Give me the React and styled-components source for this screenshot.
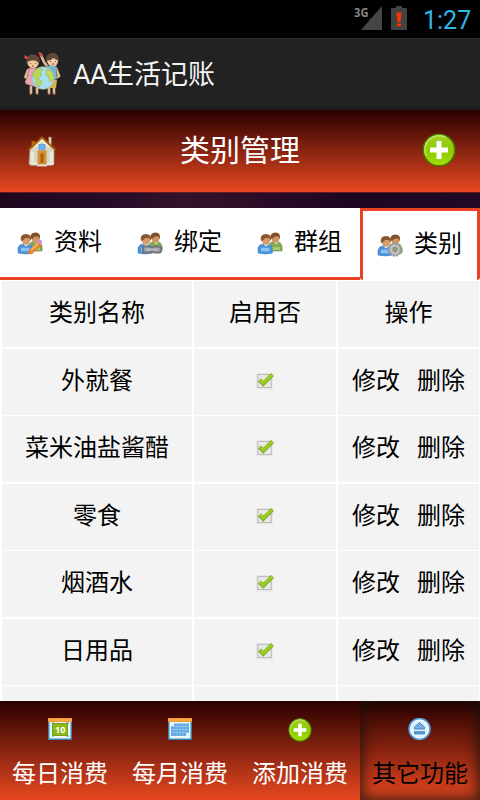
import React from "react";
import styled, { createGlobalStyle } from "styled-components";

const Global = createGlobalStyle`
  * { box-sizing: border-box; }
  html, body { margin: 0; padding: 0; overflow: hidden; }
  body { font-family: "Noto Sans CJK SC", sans-serif; background: #fff; }
  svg { display: block; flex: none; }
`;

const Screen = styled.div`
  width: 480px;
  height: 800px;
  display: flex;
  flex-direction: column;
  overflow: hidden;
  background: #fff;
`;

const StatusBar = styled.div`
  height: 38px;
  flex: none;
  background: #000;
  display: flex;
  align-items: flex-start;
  justify-content: flex-end;
  padding: 0 9px 0 0;
`;

const StatusIcons = styled.div`
  display: flex;
  gap: 8px;
`;

const Clock = styled.span`
  font: 400 25px/41px Roboto, sans-serif;
  width: 48px;
  margin-left: 16px;
  white-space: nowrap;
  color: #33b5e5;
`;

const TitleBar = styled.div`
  height: 72px;
  flex: none;
  background: #222;
  border-top: 1px solid #303030;
  border-bottom: 3px solid #1b1b1b;
  display: flex;
  align-items: center;
  padding: 1px 0 0 22px;
`;

const AppTitle = styled.h1`
  margin: 0 0 0 11px;
  font-size: 27px;
  line-height: 40px;
  font-weight: 400;
  color: #f3f3f3;
  white-space: nowrap;

  span { font-family: Roboto, sans-serif; letter-spacing: -0.6px; }
`;

const Header = styled.header`
  height: 83px;
  flex: none;
  background: linear-gradient(#290000, #e84820);
  border-bottom: 1px solid #641b1b;
  display: flex;
  align-items: center;
  justify-content: space-between;
  padding: 0 24px 3px 26px;
`;

const PageTitle = styled.h2`
  margin: 0;
  padding-bottom: 4px;
  font-size: 30px;
  line-height: 44px;
  font-weight: 400;
  color: #fff;
`;

const Band = styled.div`
  height: 15px;
  flex: none;
  background: linear-gradient(90deg, #1f0720, #270d28 25%, #35122c 38%, #280a26 60%, #1c0620 75%, #220a27);
`;

const Tabs = styled.nav`
  height: 72px;
  flex: none;
  display: grid;
  grid-template-columns: repeat(4, 120px);
`;

const Tab = styled.div`
  display: flex;
  align-items: center;
  gap: 11px;
  padding-left: ${(p) => (p.$active ? "14px" : "17px")};
  padding-top: ${(p) => (p.$active ? "0" : "2px")};
  border: 3px solid #e84222;
  border-width: ${(p) => (p.$active ? "3px 3px 0" : "0 0 3px")};
  border-radius: ${(p) => (p.$active ? "0 0 3px 3px" : "0")};
`;

const TabLabel = styled.span`
  padding-bottom: 7px;
  font-size: 24px;
  line-height: 36px;
  color: #000;
`;

const Table = styled.main`
  flex: 1;
  min-height: 0;
  overflow: hidden;
  padding: 1px 1px 0 2px;
  background: #fff;
`;

const Row = styled.div`
  display: grid;
  grid-template-columns: 190px 142px 141px;
  column-gap: 2px;
  height: 66px;
  margin-bottom: ${(p) => p.$gap}px;
`;

const Cell = styled.div`
  background: #f3f3f3;
  display: flex;
  align-items: center;
  justify-content: center;
  padding-bottom: 2px;
`;

const CellText = styled.span`
  padding-bottom: 4px;
  font-size: 24px;
  line-height: 36px;
  color: #000;
  white-space: nowrap;

  & + & { margin-left: 17px; }
`;

const BottomNav = styled.nav`
  height: 99px;
  flex: none;
  display: grid;
  grid-template-columns: repeat(4, 120px);
  background: linear-gradient(#290000, #e84820);
`;

const NavItem = styled.div`
  display: flex;
  flex-direction: column;
  align-items: center;
  padding-top: 17px;
  gap: 12px;
  font-size: 24px;
  line-height: 36px;
  color: ${(p) => (p.$active ? "#000" : "#fff")};
  box-shadow: ${(p) => (p.$active ? "inset 0 0 13px 3px rgba(25, 18, 12, 0.8)" : "none")};
`;

const SignalIcon = () => (
  <svg width="30" height="32" viewBox="0 0 30 32">
    <path d="M29 6V30H8Z" fill="#454545" />
    <path d="M0 0H16V19H0Z" fill="#000" />
    <path d="M16 21L18 18.500V19H16Z" fill="#454545" />
    <text x="1" y="17" fontFamily="Open Sans" fontWeight="700" fontSize="13" textLength="14.500" lengthAdjust="spacingAndGlyphs" fill="#858585">3G</text>
  </svg>
);

const BatteryIcon = () => (
  <svg width="16" height="32" viewBox="0 0 16 32">
    <path d="M5 6H11V8H16V30H0V8H5Z" fill="#424242" />
    <path d="M5.500 12.500H10.500L9.500 22H6.500Z" fill="#ff3300" />
    <ellipse cx="8" cy="24.800" rx="2.300" ry="1.500" fill="#ff3300" />
  </svg>
);

const LogoIcon = () => (
  <svg width="40" height="46" viewBox="0 0 40 46">
    <g stroke="#e3bb93" strokeWidth="2.600" strokeLinecap="round" fill="none">
      <path d="M9 36V42M15 37V42M27 37V42M32 35V42" />
      <path d="M6 19L3.500 26L7 28M34 17L37 25L34 27M25 15L22 11L19 4" />
    </g>
    <path d="M7 43H10M14 43H17M26 43H29M31 43H34" stroke="#9a6348" />
    <path d="M7 17H14L17 37L4 33Q2 31 5 27Z" fill="#eaa2b4" stroke="#a76570" strokeWidth=".6" />
    <path d="M24 15L34 14L35 27L30 31L24 25Z" fill="#79b8ca" stroke="#467a85" strokeWidth=".6" />
    <path d="M27 29H35L34 37H27Z" fill="#d7b54a" />
    <circle cx="11" cy="10" r="6.800" fill="#604839" />
    <path d="M5.500 11Q8 9 11 9.500Q15 9 16.500 12Q16 17 11 17Q6 17 5.500 11Z" fill="#f0ca9f" />
    <circle cx="30.500" cy="8" r="6.300" fill="#604839" />
    <path d="M25 9.500Q29 10 31 7L36 9.500Q36 15 31 15Q25.500 15 25 9.500Z" fill="#f0ca9f" />
    <path d="M2 4L6 6V8L3 8ZM16 1L20 2L21 6L18 5Z" fill="#d94743" />
    <path d="M8 12.500h1M13 12.500h1M28 10.500h1M33 10.500h1M10 15h2M30 13h2" stroke="#805038" />
    <circle cx="21" cy="27" r="11.300" fill="#a8ddee" stroke="#b3ad94" strokeWidth=".7" />
    <path d="M12 20L18 17L21 19L18 22L20 24L16 27L20 31L17 36L14 33L14 28L10 25Z" fill="#b9d75b" stroke="#91a840" strokeWidth=".5" />
    <path d="M25 18L30 21L32 27L29 31L27 29L27 26L24 24Z" fill="#c1dc5d" stroke="#91a840" strokeWidth=".5" />
  </svg>
);

const HomeIcon = () => (
  <svg width="32" height="36" viewBox="0 0 32 36">
    <path d="M22.500 5H25.500V14H22.500Z" fill="#d3d2bd" stroke="#99513a" strokeWidth=".6" />
    <path d="M5.500 9H9V14H5.500Z" fill="#bd6800" />
    <path d="M4 17L16 6L28 17V31Q28 33.500 25 33.500H6Q3 33.500 3 31Z" fill="#d6d7c4" stroke="#a39d87" strokeWidth=".6" />
    <path d="M5 20H8V30H5ZM24 20H27V30H24Z" fill="#e9eadb" />
    <path d="M2.500 18L16 5.500L29.500 18" fill="none" stroke="#a9620c" strokeWidth="1.800" />
    <path d="M9 15L16 8.500L23 15" fill="none" stroke="#f5f3dd" strokeWidth="1.400" />
    <rect x="13" y="12.500" width="6" height="5" fill="#6ab1f4" stroke="#4a8fd7" strokeWidth=".6" />
    <rect x="11.800" y="18.500" width="8.500" height="14" fill="#d38d2c" stroke="#cfaa80" />
    <path d="M14.500 21.500H17.500V31H14.500Z" fill="#aa600a" />
    <path d="M4 31.500H11M21 31.500H28" stroke="#f1f0e4" strokeWidth="1.500" />
    <path d="M11 33.500H21" stroke="#e3dfd2" strokeWidth="1.800" />
  </svg>
);

const AddIcon = ({ size }) => (
  <svg width={size} height={size} viewBox="0 0 34 34">
    <defs>
      <linearGradient id="addFill" x2="0" y2="1">
        <stop stopColor="#a4cf25" />
        <stop offset=".5" stopColor="#8ccb00" />
        <stop offset="1" stopColor="#a2dd0a" />
      </linearGradient>
    </defs>
    <circle cx="17" cy="17" r="15.800" fill="url(#addFill)" stroke="#467800" strokeWidth="1.500" />
    <path d="M4.500 23A14 14 0 0 1 24 4.500" fill="none" stroke="#c3e060" strokeWidth="1.600" />
    <path d="M14.500 8H19.500V14.500H26V19.500H19.500V26H14.500V19.500H8V14.500H14.500Z" fill="#fff" />
  </svg>
);

const Badge = ({ kind }) => {
  if (kind === "edit")
    return (
      <g>
        <path d="M20 10L22 8Q26 9 24.500 14L22 14Z" fill="#d48bc9" />
        <path d="M12 20L20 11.500L24 15L15 22.500L11 23Z" fill="#ed8a25" stroke="#c87830" strokeWidth=".6" />
        <path d="M14 19L21 12.500" stroke="#ffc37a" strokeWidth="1.200" />
      </g>
    );
  if (kind === "link")
    return (
      <g fill="none" stroke="#74777a" strokeWidth="2.200">
        <rect x="6" y="15.500" width="8" height="6" rx="2" fill="#a4a8aa" />
        <rect x="16" y="15.500" width="8" height="6" rx="2" fill="#a4a8aa" />
        <path d="M10 18.500H20" stroke="#bcbec0" />
      </g>
    );
  if (kind === "gear")
    return (
      <g>
        <circle cx="18" cy="16.500" r="6.300" fill="#aeb0af" stroke="#909392" strokeWidth="1.800" strokeDasharray="2 1.300" />
        <circle cx="18" cy="16.500" r="4" fill="none" stroke="#cfcfcf" />
        <circle cx="18" cy="16.500" r="2" fill="#83ad69" stroke="#858585" strokeWidth=".8" />
      </g>
    );
  return null;
};

const UsersIcon = ({ kind }) => (
  <svg width="26" height="26" viewBox="0 0 26 26">
    <path d="M13 12Q19 8 23.500 12Q26 15 25 20H13Z" fill="#83aa51" stroke="#719c48" strokeWidth=".6" />
    <path d="M16 17.500H23" stroke="#a9cb79" strokeWidth="3" />
    <path d="M16.500 10.500L19 13.500L22 10.500Z" fill="#eadfca" />
    <ellipse cx="18.500" cy="7" rx="4" ry="4.800" fill="#cf9562" />
    <path d="M13.500 8Q12.500 1.500 18.500 1.500Q24 1.500 23 8.500L21.500 5.500L17.500 5.500Q16 8 13.500 8Z" fill="#80502c" />
    <path d="M1 22V17Q2 13 6.500 13H11Q15.500 14 15.500 22Q8 24 1 22Z" fill="#4c94dc" stroke="#3783cf" strokeWidth=".6" />
    <path d="M4 18.500H12.500" stroke="#8fc1f3" strokeWidth="3.500" />
    <path d="M6.500 13L9 15.500L12 13Z" fill="#edf0f2" />
    <ellipse cx="9" cy="9" rx="4.200" ry="4.800" fill="#d79c69" />
    <path d="M4 10Q2.500 3 9 3Q15 3 13.800 10L12 7L8 7Q6.500 10 4 10Z" fill="#8a5730" />
    <Badge kind={kind} />
  </svg>
);

const CheckIcon = () => (
  <svg width="20" height="20" viewBox="0 0 20 20">
    <rect x="1" y="2" width="17" height="16.500" fill="#e9e9e9" />
    <rect x="2.800" y="3.500" width="13.500" height="13" fill="#e9e9e9" stroke="#bcbcbc" strokeWidth="1.100" />
    <path d="M4.500 9L8.200 12.800L17.500 3.500" fill="none" stroke="#7dab28" strokeWidth="4.200" />
    <path d="M4.800 8.800L8.200 12.200L17.300 3.500" fill="none" stroke="#9ccb24" strokeWidth="3" />
  </svg>
);

const CalendarIcon = ({ month }) => (
  <svg width="24" height="24" viewBox="0 0 24 24">
    <rect width="24" height="22" fill="#3487b0" />
    <rect x="1.500" y="4" width="21" height="16.500" fill="#edf6fa" />
    <rect width="24" height="4" fill="#f6982e" />
    <path d="M1 2H23" stroke="#ffc070" />
    {month ? (
      <g>
        <path d="M6 5.500H21V15H18V18H3V8H6Z" fill="#5da6e4" />
        <path d="M3 8.500H21M3 11.500H21M3 14.500H21M6 5V18M9 5V18M12 5V18M15 5V18M18 5V18" stroke="#9bcaf0" strokeWidth=".7" />
      </g>
    ) : (
      <g>
        <rect x="4.500" y="5.500" width="15" height="12" fill="#8cbb14" stroke="#719f20" strokeWidth="1" />
        <path d="M4 5H6M18 5H21M4 18H6M18 18H21" stroke="#718279" />
        <text x="12.200" y="15" textAnchor="middle" fontFamily="Open Sans" fontWeight="700" fontSize="9" fill="#fff">10</text>
      </g>
    )}
  </svg>
);

const MoreIcon = () => (
  <svg width="24" height="24" viewBox="0 0 24 24">
    <circle cx="11.500" cy="11" r="10.500" fill="#deefff" stroke="#4d9ad9" strokeWidth="1.600" />
    <circle cx="11.500" cy="11" r="8.800" fill="none" stroke="#fff" />
    <path d="M11.500 4.500L16.500 9V11H6.500V9Z" fill="#75afe0" stroke="#3b80bb" strokeWidth=".9" />
    <rect x="6.500" y="13.500" width="10" height="2.500" fill="#559cd6" stroke="#3b80bb" strokeWidth=".7" />
  </svg>
);

const tabs = [
  ["资料", "edit"],
  ["绑定", "link"],
  ["群组", "group"],
  ["类别", "gear"],
];
const headings = ["类别名称", "启用否", "操作"];
const categories = ["外就餐", "菜米油盐酱醋", "零食", "烟酒水", "日用品"];
const navItems = [
  ["每日消费", <CalendarIcon />],
  ["每月消费", <CalendarIcon month />],
  ["添加消费", <AddIcon size={24} />],
  ["其它功能", <MoreIcon />],
];

export default function App() {
  return (
    <>
      <Global />
      <Screen>
        <StatusBar>
          <StatusIcons>
            <SignalIcon />
            <BatteryIcon />
          </StatusIcons>
          <Clock>1:27</Clock>
        </StatusBar>
        <TitleBar>
          <LogoIcon />
          <AppTitle><span>AA</span>生活记账</AppTitle>
        </TitleBar>
        <Header>
          <HomeIcon />
          <PageTitle>类别管理</PageTitle>
          <AddIcon size={34} />
        </Header>
        <Band />
        <Tabs>
          {tabs.map(([label, kind]) => (
            <Tab key={kind} $active={kind === "gear"}>
              <UsersIcon kind={kind} />
              <TabLabel>{label}</TabLabel>
            </Tab>
          ))}
        </Tabs>
        <Table>
          <Row $gap={2}>
            {headings.map((h) => (
              <Cell key={h}><CellText>{h}</CellText></Cell>
            ))}
          </Row>
          {categories.map((name, i) => (
            <Row key={name} $gap={i % 2 ? 2 : 1}>
              <Cell><CellText>{name}</CellText></Cell>
              <Cell><CheckIcon /></Cell>
              <Cell><CellText>修改</CellText><CellText>删除</CellText></Cell>
            </Row>
          ))}
          <Row $gap={0}>
            <Cell />
            <Cell />
            <Cell />
          </Row>
        </Table>
        <BottomNav>
          {navItems.map(([label, icon], i) => (
            <NavItem key={label} $active={i === 3}>
              {icon}
              {label}
            </NavItem>
          ))}
        </BottomNav>
      </Screen>
    </>
  );
}
